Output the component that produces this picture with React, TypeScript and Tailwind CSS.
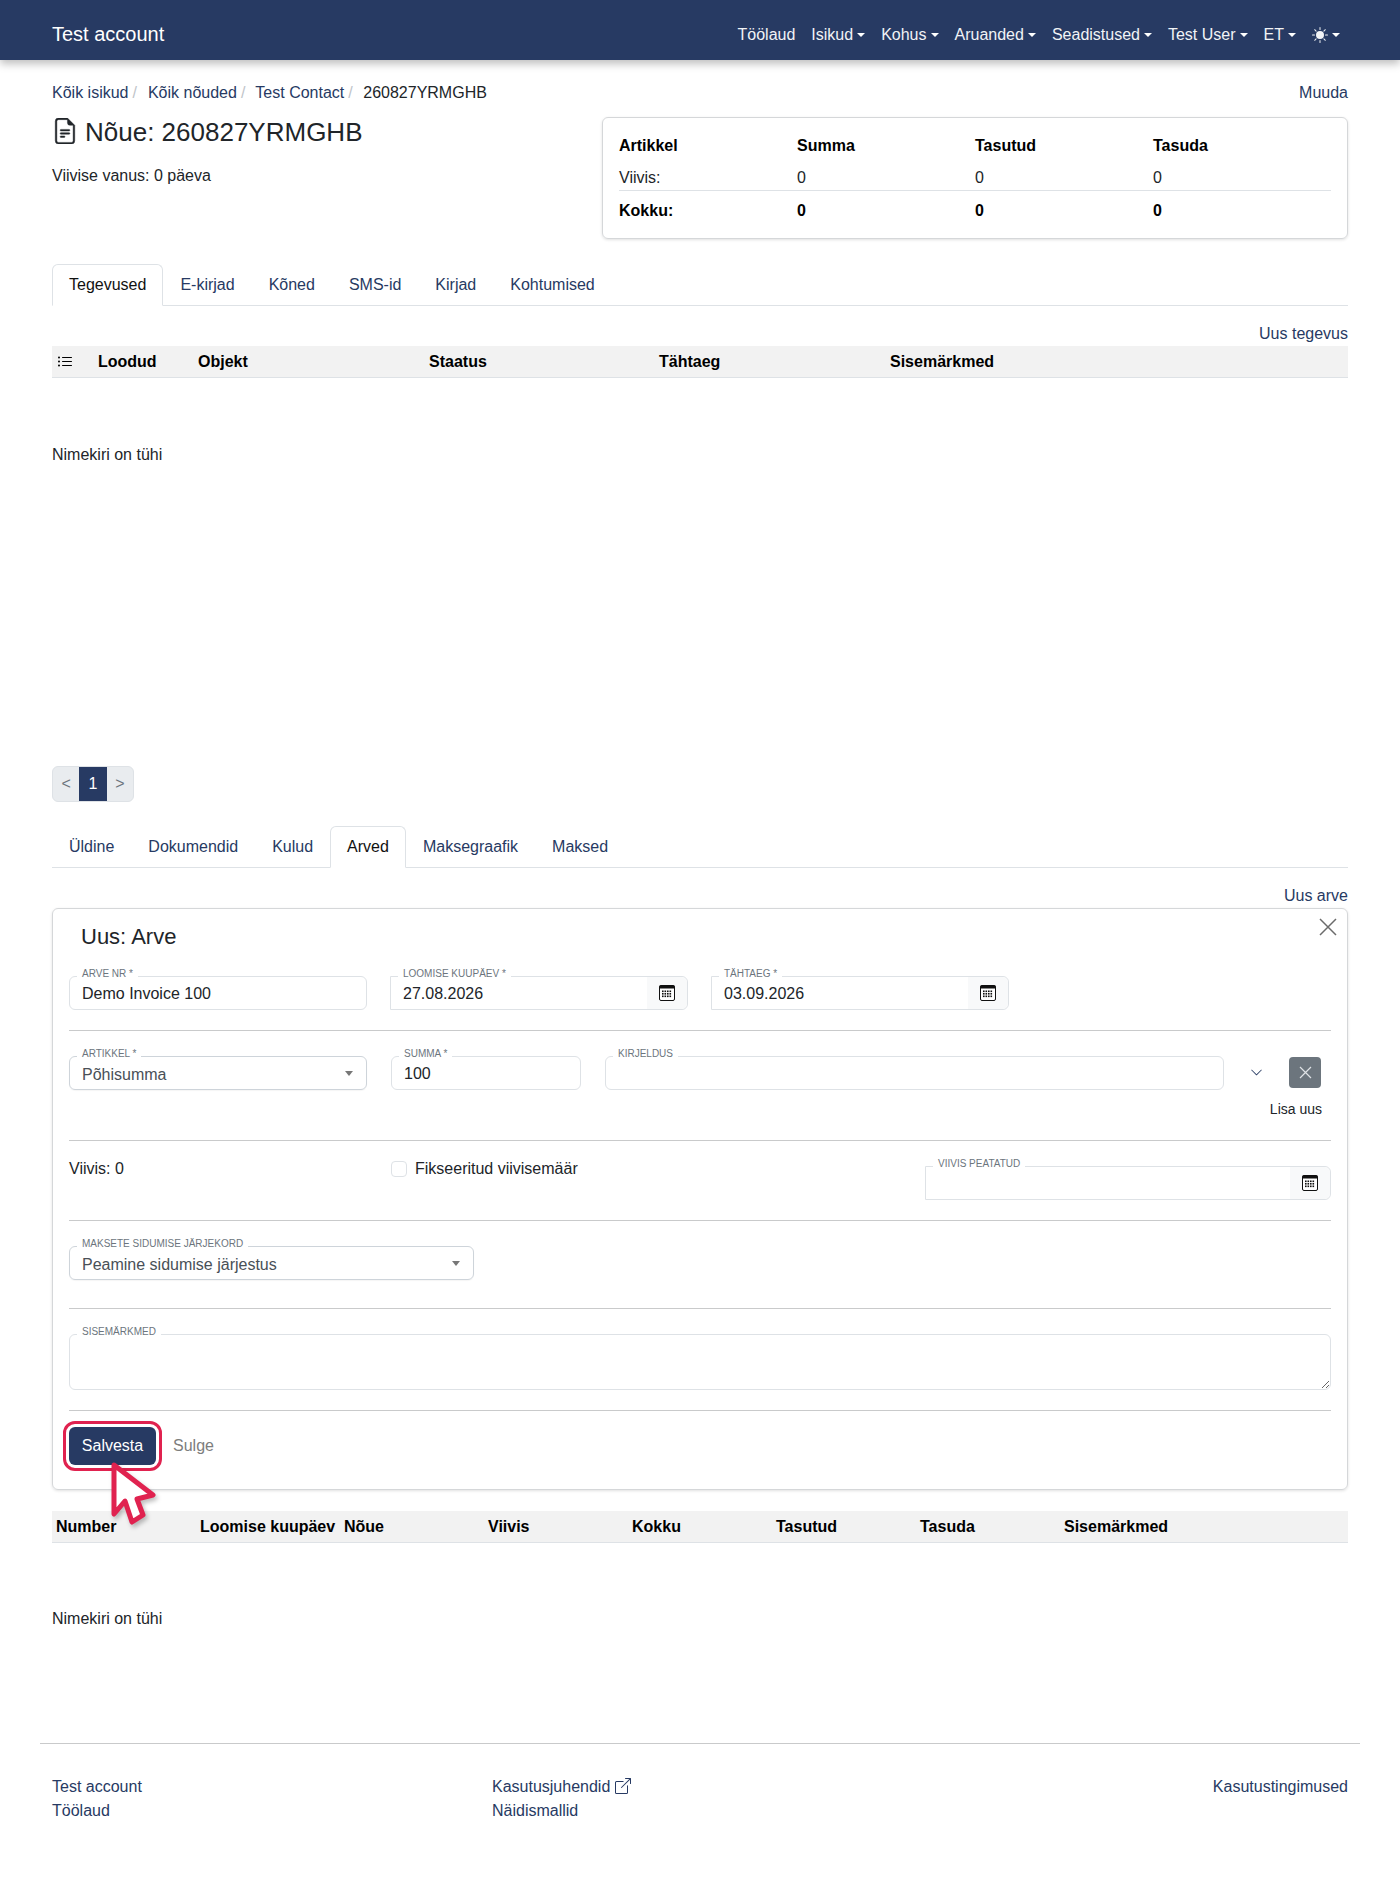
import type { ReactNode } from 'react';
import { BsBoxArrowUpRight, BsChevronDown, BsFileEarmarkText, BsListUl, BsSunFill } from 'react-icons/bs';

const navItems = ['Isikud', 'Kohus', 'Aruanded', 'Seadistused', 'Test User', 'ET'];
const topTabs = ['Tegevused', 'E-kirjad', 'Kõned', 'SMS-id', 'Kirjad', 'Kohtumised'];
const lowerTabs = ['Üldine', 'Dokumendid', 'Kulud', 'Arved', 'Maksegraafik', 'Maksed'];
const invoiceColumns = ['Number', 'Loomise kuupäev', 'Nõue', 'Viivis', 'Kokku', 'Tasutud', 'Tasuda', 'Sisemärkmed'];

function Caret() {
  return <span className="ml-[4px] inline-block h-0 w-0 border-x-[4px] border-t-[4px] border-x-transparent border-t-white align-[3px]" />;
}

function CalendarIcon() {
  return (
    <svg width="16" height="16" viewBox="0 0 16 16" aria-hidden="true">
      <rect x="0.5" y="0.5" width="15" height="15" rx="1.5" fill="#fff" stroke="#111" />
      <rect x="0.5" y="0.5" width="15" height="3" fill="#111" />
      {[3, 5.5, 8, 10.5].map((x) =>
        [5.5, 8, 10.5].map((y) => <rect key={`${x}-${y}`} x={x} y={y} width="1.6" height="1.6" fill="#111" />)
      )}
    </svg>
  );
}

function Tabs({ items, active }: { items: string[]; active: string }) {
  return (
    <div className="flex h-[42px] border-b border-[#dee2e6]">
      {items.map((item) => (
        <div
          key={item}
          className={
            item === active
              ? 'h-[42px] rounded-t-[6px] border border-[#dee2e6] border-b-white bg-white px-[16px] pt-[8px] text-[#111]'
              : 'h-[41px] border border-transparent px-[16px] pt-[8px] text-[#273a63]'
          }
        >
          {item}
        </div>
      ))}
    </div>
  );
}

function FieldLabel({ children }: { children: ReactNode }) {
  return (
    <span className="absolute -top-[9px] left-[7px] z-10 whitespace-nowrap bg-white px-[5px] text-[10px] leading-[12px] text-[#6c757d]">
      {children}
    </span>
  );
}

function TextField({ label, value, className }: { label: string; value?: string; className: string }) {
  return (
    <div className={`relative h-[34px] rounded-[6px] border border-[#dee2e6] ${className}`}>
      <FieldLabel>{label}</FieldLabel>
      <input defaultValue={value} className="h-full w-full bg-transparent pl-[12px] pt-[2px] text-[#212529] outline-none" />
    </div>
  );
}

function DateField({ label, value, className }: { label: string; value?: string; className: string }) {
  return (
    <div className={`relative flex h-[34px] rounded-r-[6px] border border-[#dee2e6] ${className}`}>
      <FieldLabel>{label}</FieldLabel>
      <input defaultValue={value} className="h-full min-w-0 flex-1 bg-transparent pl-[12px] pt-[2px] text-[#212529] outline-none" />
      <div className="flex w-[40px] items-center justify-center rounded-r-[6px] bg-[#f8f9fa]">
        <CalendarIcon />
      </div>
    </div>
  );
}

function SelectField({ label, value, className }: { label: string; value: string; className: string }) {
  return (
    <div className={`relative h-[34px] rounded-[6px] border border-[#ced4da] shadow-[0_1px_1px_rgba(0,0,0,0.04)] ${className}`}>
      <FieldLabel>{label}</FieldLabel>
      <select className="h-full w-full appearance-none bg-transparent pl-[12px] pt-[4px] text-[#495057] outline-none">
        <option>{value}</option>
      </select>
      <span className="absolute right-[13px] top-[14px] h-0 w-0 border-x-[4px] border-t-[5px] border-x-transparent border-t-[#777]" />
    </div>
  );
}

function Divider({ className }: { className: string }) {
  return <div className={`h-px bg-[#c9cacb] ${className}`} />;
}

export default function App() {
  return (
    <div className="relative min-h-[1885px] bg-white font-['Liberation_Sans',Arial,sans-serif] text-[16px] leading-[24px] text-[#212529]">
      <nav className="flex h-[60px] items-center justify-between bg-[#273a63] pl-[52px] pr-[52px] pt-[8px] text-white shadow-[0_4px_8px_rgba(0,0,0,0.25)]">
        <div className="text-[20px]">Test account</div>
        <div className="mt-[2px] flex items-center gap-[16px] text-[#f1f3f6]">
          <span>Töölaud</span>
          {navItems.map((item) => (
            <span key={item}>
              {item}
              <Caret />
            </span>
          ))}
          <span className="mr-[8px] flex items-center">
            <BsSunFill size={16} />
            <Caret />
          </span>
        </div>
      </nav>

      <main className="px-[52px]">
        <div className="mt-[21px] flex justify-between text-[#273a63]">
          <div className="flex">
            <span>Kõik isikud</span>
            <span className="ml-[4px] mr-[11px] text-[#c0c4c9]">/</span>
            <span>Kõik nõuded</span>
            <span className="ml-[4px] mr-[10px] text-[#c0c4c9]">/</span>
            <span>Test Contact</span>
            <span className="ml-[4px] mr-[10.5px] text-[#c0c4c9]">/</span>
            <span className="text-[#212529]">260827YRMGHB</span>
          </div>
          <span>Muuda</span>
        </div>

        <div className="mt-[12px] flex justify-between">
          <div>
            <div className="flex items-center gap-[7px] text-[26px] leading-[30px]">
              <BsFileEarmarkText size={26} stroke="currentColor" strokeWidth={0.25} className="-mt-[3px]" />
              <span>Nõue: 260827YRMGHB</span>
            </div>
            <div className="mt-[17px]">Viivise vanus: 0 päeva</div>
          </div>
          <div className="h-[122px] w-[746px] rounded-[6px] border border-[#d5d7d9] px-[16px] pt-[16px] shadow-[0_1px_3px_rgba(0,0,0,0.12)]">
            <div className="grid grid-cols-[178px_178px_178px_178px] font-bold text-black">
              <span>Artikkel</span>
              <span>Summa</span>
              <span>Tasutud</span>
              <span>Tasuda</span>
            </div>
            <div className="mt-[8px] grid h-[25px] grid-cols-[178px_178px_178px_178px] border-b border-[#dee2e6] pb-[1px]">
              <span>Viivis:</span>
              <span>0</span>
              <span>0</span>
              <span>0</span>
            </div>
            <div className="mt-[8px] grid grid-cols-[178px_178px_178px_178px] font-bold text-black">
              <span>Kokku:</span>
              <span>0</span>
              <span>0</span>
              <span>0</span>
            </div>
          </div>
        </div>

        <div className="mt-[25px]">
          <Tabs items={topTabs} active="Tegevused" />
        </div>

        <div className="mt-[16px] text-right text-[#273a63]">Uus tegevus</div>
        <div className="flex h-[32px] items-center border-b border-[#dee2e6] bg-[#f2f2f2] font-bold text-black">
          <span className="w-[46px] pl-[5px]">
            <BsListUl size={16} />
          </span>
          <span className="w-[100px]">Loodud</span>
          <span className="w-[231px]">Objekt</span>
          <span className="w-[230px]">Staatus</span>
          <span className="w-[231px]">Tähtaeg</span>
          <span>Sisemärkmed</span>
        </div>
        <div className="mt-[65px]">Nimekiri on tühi</div>

        <div className="mt-[299px] flex h-[36px] w-[82px] overflow-hidden rounded-[6px] border border-[#dee2e6] bg-[#e9ecef] text-[#6c757d]">
          <span className="flex w-[27px] items-center justify-center">&lt;</span>
          <span className="flex w-[28px] items-center justify-center bg-[#273a63] text-white">1</span>
          <span className="flex w-[27px] items-center justify-center">&gt;</span>
        </div>

        <div className="mt-[24px]">
          <Tabs items={lowerTabs} active="Arved" />
        </div>

        <div className="mt-[16px] text-right text-[#273a63]">Uus arve</div>

        <section className="relative h-[582px] rounded-[6px] border border-[#d5d7d9] px-[16px] shadow-[0_1px_3px_rgba(0,0,0,0.12)]">
          <button className="absolute right-[10px] top-[9px] text-[#6b6b6b]" aria-label="Sulge">
            <svg width="18" height="18" viewBox="0 0 18 18" fill="none" stroke="currentColor" strokeWidth="1.5">
              <path d="M1 1 L17 17 M17 1 L1 17" />
            </svg>
          </button>
          <h2 className="ml-[12px] pt-[15px] text-[22px] leading-[26px] text-[#212529]">Uus: Arve</h2>

          <div className="mt-[26px] flex">
            <TextField label="ARVE NR *" value="Demo Invoice 100" className="w-[298px]" />
            <DateField label="LOOMISE KUUPÄEV *" value="27.08.2026" className="ml-[23px] w-[298px]" />
            <DateField label="TÄHTAEG *" value="03.09.2026" className="ml-[23px] w-[298px]" />
          </div>

          <Divider className="mt-[20px]" />

          <div className="mt-[25px] flex">
            <SelectField label="ARTIKKEL *" value="Põhisumma" className="w-[298px]" />
            <TextField label="SUMMA *" value="100" className="ml-[24px] w-[190px]" />
            <TextField label="KIRJELDUS" className="ml-[24px] w-[619px]" />
            <div className="flex h-[32px] w-[65px] items-center pl-[26px] text-[#273a63]">
              <BsChevronDown size={13} />
            </div>
            <div className="mt-px flex h-[31px] w-[32px] items-center justify-center rounded-[4px] bg-[#6c757d] text-[#dfe2e5]">
              <svg width="13" height="13" viewBox="0 0 13 13" fill="none" stroke="currentColor" strokeWidth="1.2">
                <path d="M1 1 L12 12 M12 1 L1 12" />
              </svg>
            </div>
          </div>
          <div className="mr-[9px] mt-[7px] text-right text-[14px] leading-[24px] text-[#212529]">Lisa uus</div>

          <Divider className="mt-[19px]" />

          <div className="mt-[25px] flex h-[34px]">
            <span className="-mt-[9px] w-[322px]">Viivis: 0</span>
            <label className="-mt-[9px] flex items-start gap-[8px]">
              <span className="mt-[4px] block h-[16px] w-[16px] rounded-[4px] border border-[#dee2e6] bg-white" />
              Fikseeritud viivisemäär
            </label>
            <DateField label="VIIVIS PEATATUD" className="ml-auto w-[406px]" />
          </div>

          <Divider className="mt-[20px]" />

          <div className="mt-[25px]">
            <SelectField label="MAKSETE SIDUMISE JÄRJEKORD" value="Peamine sidumise järjestus" className="w-[405px]" />
          </div>

          <Divider className="mt-[28px]" />

          <div className="relative mt-[25px] h-[56px] rounded-[6px] border border-[#dee2e6]">
            <FieldLabel>SISEMÄRKMED</FieldLabel>
            <textarea className="block h-full w-full bg-transparent outline-none" />
          </div>

          <Divider className="mt-[20px]" />

          <div className="mt-[16px] flex items-center">
            <div className="flex h-[38px] w-[87px] items-center justify-center rounded-[6px] bg-[#273a63] text-white outline-[3px] outline-offset-[3px] outline-[#e0224f]">
              Salvesta
            </div>
            <span className="ml-[17px] text-[#7d7d7d]">Sulge</span>
          </div>
        </section>

        <div className="mt-[21px] grid h-[32px] grid-cols-[repeat(7,144px)_1fr] items-center border-b border-[#dee2e6] bg-[#f2f2f2] font-bold text-black">
          {invoiceColumns.map((col) => (
            <span key={col} className="whitespace-nowrap pl-[4px]">
              {col}
            </span>
          ))}
        </div>
        <div className="mt-[64px]">Nimekiri on tühi</div>

        <footer className="-mx-[12px] mt-[112px] border-t border-[#c9cacb] px-[12px] pt-[31px]">
          <div className="grid grid-cols-[440px_1fr_auto] text-[#273a63]">
            <div>
              <div>Test account</div>
              <div>Töölaud</div>
            </div>
            <div>
              <div className="flex items-start gap-[5px]">
                Kasutusjuhendid
                <BsBoxArrowUpRight size={16} className="mt-[3px]" />
              </div>
              <div>Näidismallid</div>
            </div>
            <div>Kasutustingimused</div>
          </div>
        </footer>
      </main>

      {/* Click pointer drawn over the save button */}
      <svg className="pointer-events-none absolute left-[106px] top-[1458px]" width="60" height="76" viewBox="106 1458 60 76">
        <polygon
          points="114,1465 153,1495 137,1499 143,1515 132,1522 125,1501 114,1514"
          fill="#fff"
          stroke="#e0224f"
          strokeWidth="5"
          strokeLinejoin="round"
          style={{ filter: 'drop-shadow(2px 3px 2px rgba(0,0,0,0.25))' }}
        />
      </svg>
    </div>
  );
}
